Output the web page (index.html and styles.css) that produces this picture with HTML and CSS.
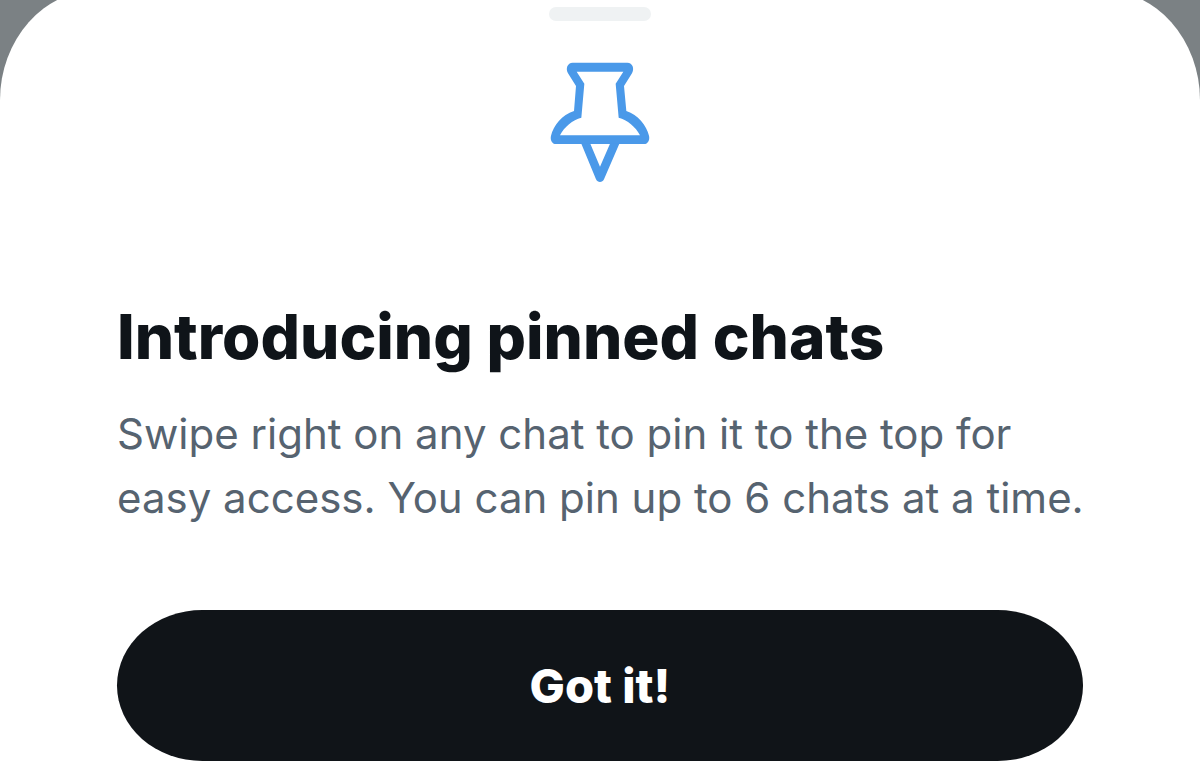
FILE: index.html
```
<!DOCTYPE html>
<html lang="en">
<head>
  <meta charset="UTF-8">
  <meta name="viewport" content="width=device-width, initial-scale=1.0">
  <title>Pinned chats</title>
  <link rel="stylesheet" href="styles.css">
</head>
<body>
  <main class="sheet">
    <div class="handle"></div>
    <svg class="pin" viewBox="54 180 312 372" aria-hidden="true">
      <path fill-rule="evenodd" d="M128 188H292C308 188 314 206 306 220L282 258L289 333C324 344 350 378 357 407C360 420 354 432 342 432H78C66 432 60 420 63 407C70 378 96 344 132 333L138 258L114 220C106 206 112 188 128 188ZM140 215L163 251L154 353C128 360 103 380 90 406H330C317 380 292 360 266 353L257 251L280 215Z"/>
      <path d="M154 431L198 538C203 549 217 549 222 538L268 431H240L210 500L181 431Z"/>
    </svg>
    <h1>Introducing pinned chats</h1>
    <p>Swipe right on any chat to pin it to the top for easy access. You can pin up to 6 chats at a time.</p>
    <button type="button">Got it!</button>
  </main>
</body>
</html>
```

FILE: styles.css
```
body {
  margin: 0;
  background: #7b8184;
  font-family: Inter, "Liberation Sans", sans-serif;
}
.sheet {
  box-sizing: border-box;
  min-height: calc(100vh + 10px);
  margin-top: -10px;
  padding: 17px 117px 23px;
  display: flex;
  flex-direction: column;
  background: #fff;
  border-radius: 98px 98px 0 0 / 110px 110px 0 0;
}
.handle {
  width: 102px;
  height: 14px;
  align-self: center;
  border-radius: 7px;
  background: #eff2f3;
}
.pin {
  width: 104px;
  height: 124px;
  margin-top: 39px;
  align-self: center;
  fill: #4a99e9;
}
h1 {
  margin: 113px 0 0;
  font-size: 62px;
  line-height: 80px;
  font-weight: 800;
  color: #0f1419;
}
p {
  margin: 25px -16px 0 0;
  font-size: 42px;
  line-height: 64px;
  color: #566370;
}
button {
  height: 151px;
  margin-top: 80px;
  border: none;
  border-radius: 86px / 76px;
  background: #101418;
  color: #fff;
  font-family: inherit;
  font-size: 47px;
  font-weight: 800;
  cursor: pointer;
}
```
